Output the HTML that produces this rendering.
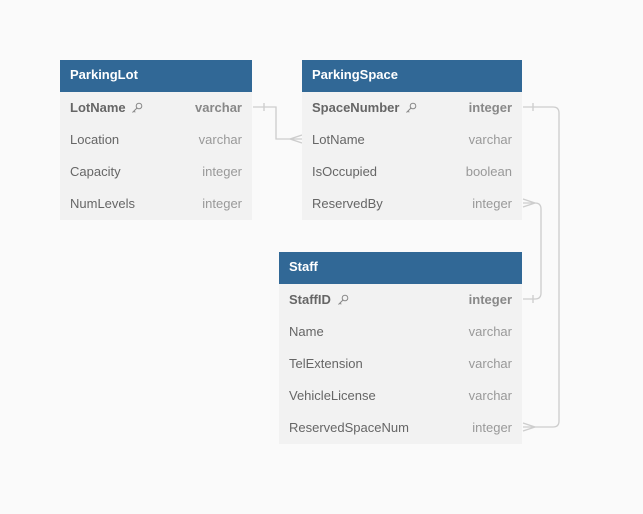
<!DOCTYPE html>
<html><head><style>
body{margin:0;width:643px;height:514px;background:#fafafa;font-family:"Liberation Sans",sans-serif;position:relative;overflow:hidden}
.t{position:absolute;background:#f2f2f2}
.h{height:32px;background:#316896;color:#fff;font-weight:bold;font-size:13px;line-height:30px;padding-left:10px}
.r{height:32px;line-height:31px;font-size:13px;color:#666;padding:0 10px;display:flex;justify-content:space-between}
.r span:last-child{color:#999}
.r.b{font-weight:bold;color:#666}
.r.b span:last-child{color:#888}
.k{display:inline-block;vertical-align:-2px;margin-left:2px}
</style></head><body>
<svg width="643" height="514" style="position:absolute;left:0;top:0" fill="none" stroke="#cdcdcd" stroke-width="1.3">
<path d="M253 107 H276 V139 H302"/><path d="M264 103 V111"/><path d="M290 139 L302 135 M290 139 L302 143"/>
<path d="M523 107 H553 Q559 107 559 113 V421 Q559 427 553 427 H523"/><path d="M533 103 V111"/><path d="M535 427 L523 423 M535 427 L523 431"/>
<path d="M523 203 H535 Q541 203 541 209 V293 Q541 299 535 299 H523"/><path d="M533 295 V303"/><path d="M535 203 L523 199 M535 203 L523 207"/>
</svg>
<div class="t" style="left:60px;top:60px;width:192px">
<div class="h">ParkingLot</div>
<div class="r b"><span>LotName <svg class="k" width="12" height="12" viewBox="0 0 12 12" fill="none" stroke="#888" stroke-width="1"><circle cx="8" cy="4" r="2.8"/><path d="M6 6 L1.5 10.5 M3 9 L4.3 10.3"/></svg></span><span>varchar</span></div>
<div class="r"><span>Location</span><span>varchar</span></div>
<div class="r"><span>Capacity</span><span>integer</span></div>
<div class="r"><span>NumLevels</span><span>integer</span></div>
</div>
<div class="t" style="left:302px;top:60px;width:220px">
<div class="h">ParkingSpace</div>
<div class="r b"><span>SpaceNumber <svg class="k" width="12" height="12" viewBox="0 0 12 12" fill="none" stroke="#888" stroke-width="1"><circle cx="8" cy="4" r="2.8"/><path d="M6 6 L1.5 10.5 M3 9 L4.3 10.3"/></svg></span><span>integer</span></div>
<div class="r"><span>LotName</span><span>varchar</span></div>
<div class="r"><span>IsOccupied</span><span>boolean</span></div>
<div class="r"><span>ReservedBy</span><span>integer</span></div>
</div>
<div class="t" style="left:279px;top:252px;width:243px">
<div class="h">Staff</div>
<div class="r b"><span>StaffID <svg class="k" width="12" height="12" viewBox="0 0 12 12" fill="none" stroke="#888" stroke-width="1"><circle cx="8" cy="4" r="2.8"/><path d="M6 6 L1.5 10.5 M3 9 L4.3 10.3"/></svg></span><span>integer</span></div>
<div class="r"><span>Name</span><span>varchar</span></div>
<div class="r"><span>TelExtension</span><span>varchar</span></div>
<div class="r"><span>VehicleLicense</span><span>varchar</span></div>
<div class="r"><span>ReservedSpaceNum</span><span>integer</span></div>
</div>
</body></html>
